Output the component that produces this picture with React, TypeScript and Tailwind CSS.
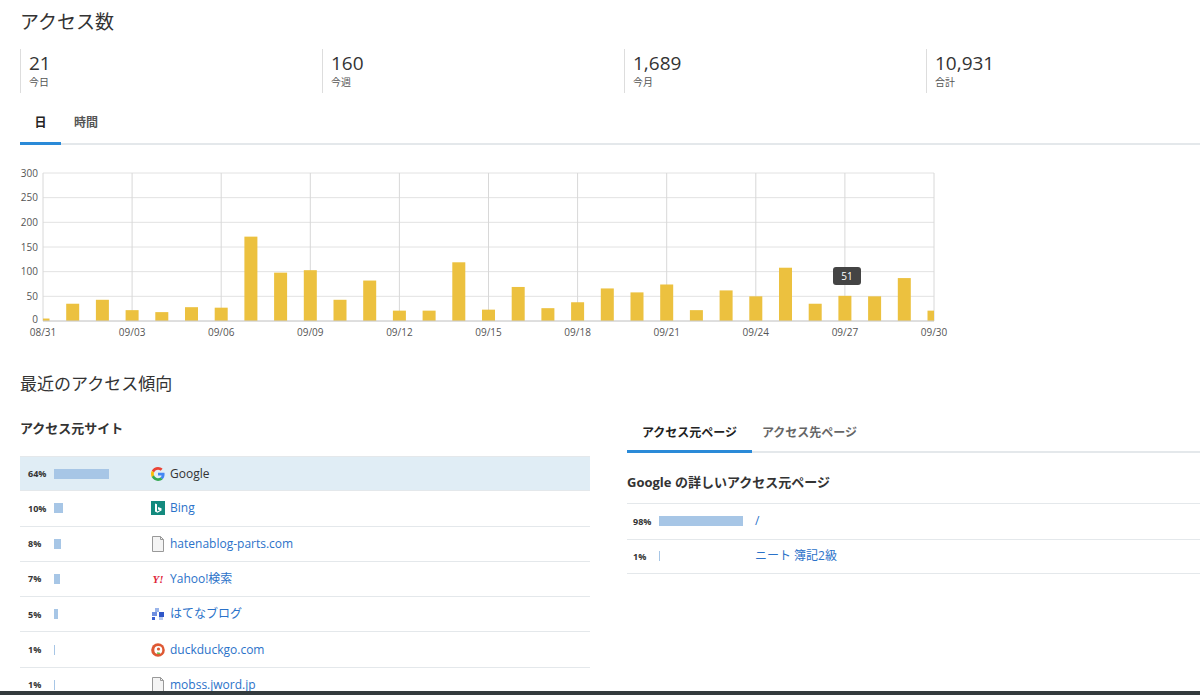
import React from "react";

const F = { fontFamily: '"Open Sans", "Noto Sans CJK JP", sans-serif' };

const values = [5, 35, 43, 22, 18, 28, 27, 171, 98, 103, 43, 82, 21, 21, 119, 23, 69, 26, 38, 66, 58, 74, 22, 62, 50, 108, 35, 51, 50, 87, 21];
const labels = ["08/31", "09/03", "09/06", "09/09", "09/12", "09/15", "09/18", "09/21", "09/24", "09/27", "09/30"];

function Chart() {
  const x0 = 43, x1 = 934, top = 172, bot = 320;
  const step = (x1 - x0) / 30;
  const y = (v: number) => bot - (v / 300) * (bot - top);
  return (
    <svg width="960" height="180" viewBox="0 160 960 180" className="block">
      {[0, 50, 100, 150, 200, 250, 300].map((v) => (
        <g key={v}>
          <line x1={x0} x2={x1} y1={y(v)} y2={y(v)} stroke="#e2e2e2" />
          <text x={38} y={y(v) + (v === 0 ? 2 : 3.5)} textAnchor="end" fontSize="10" fill="#555" style={F}>{v}</text>
        </g>
      ))}
      {labels.map((l, i) => {
        const x = x0 + i * 3 * step;
        return (
          <g key={l}>
            <line x1={x} x2={x} y1={top} y2={bot} stroke="#d8d8d8" />
            <text x={x} y={335} textAnchor="middle" fontSize="10" fill="#555" style={F}>{l}</text>
          </g>
        );
      })}
      {values.map((v, i) => {
        const cx = x0 + i * step;
        const w = 13;
        let l = cx - w / 2, r = cx + w / 2;
        if (i === 0) l = x0;
        if (i === 30) r = x1;
        return <rect key={i} x={l} y={y(v)} width={r - l} height={bot - y(v)} fill="#ecc13f" />;
      })}
      <line x1={x0} x2={x1} y1={bot} y2={bot} stroke="#ccc" />
      <rect x={833} y={266} width={28} height={18} rx={3} fill="#444" />
      <text x={847} y={279} textAnchor="middle" fontSize="10" fill="#fff" style={F}>51</text>
    </svg>
  );
}

function BarPct({ pct, max }: { pct: number; max: number }) {
  return (
    <div className="flex items-center h-full">
      <div className="bg-[#a7c6e6] h-[10px]" style={{ width: Math.max(1, (pct / 100) * max) }} />
    </div>
  );
}

const DocIcon = () => (
  <svg width="14" height="16" viewBox="0 0 14 16"><path d="M1.5 .5h8l3 3v12h-11z" fill="#f4f4f4" stroke="#999" /><path d="M9.5 .5v3h3" fill="none" stroke="#999" /></svg>
);

const icons: Record<string, React.ReactNode> = {
  google: (
    <svg width="14" height="14" viewBox="0 0 48 48"><path fill="#EA4335" d="M24 9.5c3.5 0 6.6 1.2 9 3.5l6.7-6.7C35.6 2.4 30.2 0 24 0 14.6 0 6.6 5.4 2.7 13.2l7.8 6C12.4 13.7 17.7 9.5 24 9.5z"/><path fill="#4285F4" d="M46.5 24.5c0-1.6-.1-3.1-.4-4.5H24v9h12.6c-.5 2.9-2.2 5.4-4.7 7.1l7.6 5.9c4.4-4.1 7-10.1 7-17.5z"/><path fill="#FBBC05" d="M10.5 28.8c-.5-1.5-.8-3.1-.8-4.8s.3-3.3.8-4.8l-7.8-6C1 16.6 0 20.2 0 24s1 7.4 2.7 10.8l7.8-6z"/><path fill="#34A853" d="M24 48c6.5 0 11.9-2.1 15.9-5.8l-7.6-5.9c-2.1 1.4-4.9 2.300-8.3 2.3-6.3 0-11.6-4.2-13.5-9.9l-7.8 6C6.6 42.6 14.6 48 24 48z"/></svg>
  ),
  bing: (
    <svg width="14" height="14" viewBox="0 0 14 14"><rect width="14" height="14" fill="#138a7e" /><path d="M4 2.5v8l2.5 1.2 4-2.3V7.3L7 6v2.4l1.8.8L6 10.6V3.2z" fill="#fff" /></svg>
  ),
  doc: <DocIcon />,
  yahoo: <span className="text-[11px] font-bold italic text-[#e0263a] leading-none" style={{ fontFamily: '"Liberation Serif", serif' }}>Y!</span>,
  hatena: (
    <svg width="14" height="14" viewBox="0 0 14 14"><rect x="4" y="1" width="4" height="4" fill="#9bb5ea" /><rect x="8" y="5" width="5" height="5" fill="#2f56c8" /><rect x="1" y="5" width="5" height="4" fill="#6f8fe0" /><rect x="1" y="10" width="3" height="3" fill="#3a60cf" /><rect x="8" y="10" width="4" height="3" fill="#b8caf0" /></svg>
  ),
  ddg: (
    <svg width="14" height="14" viewBox="0 0 14 14"><circle cx="7" cy="7" r="6.8" fill="#de5833" /><circle cx="7.3" cy="7" r="4" fill="#fff" /><circle cx="7.5" cy="6" r="1.6" fill="#de5833" /><path d="M6 10l3 0.5" stroke="#67bd47" strokeWidth="1.5" /></svg>
  ),
};

const sites = [
  { pct: 64, name: "Google", icon: "google", sel: true },
  { pct: 10, name: "Bing", icon: "bing" },
  { pct: 8, name: "hatenablog-parts.com", icon: "doc" },
  { pct: 7, name: "Yahoo!検索", icon: "yahoo" },
  { pct: 5, name: "はてなブログ", icon: "hatena" },
  { pct: 1, name: "duckduckgo.com", icon: "ddg" },
  { pct: 1, name: "mobss.jword.jp", icon: "doc" },
];

export default function App() {
  const stats = [
    ["21", "今日"],
    ["160", "今週"],
    ["1,689", "今月"],
    ["10,931", "合計"],
  ];
  return (
    <div className="w-[1200px] h-[695px] overflow-hidden bg-white text-[#333] relative" style={F}>
      <div className="pl-[20px]">
        <h1 className="text-[19px] pt-[8px] h-[40px] text-[#333]">アクセス数</h1>
        <div className="grid grid-cols-[302px_302px_302px_302px] mt-[9px] h-[44px]">
          {stats.map(([n, l]) => (
            <div key={l} className="border-l border-[#ddd] pl-[8px]">
              <div className="text-[19px] leading-[24px] mt-[2px]">{n}</div>
              <div className="text-[10px] text-[#555] leading-[14px]">{l}</div>
            </div>
          ))}
        </div>
        <div className="flex mt-[21px] border-b-2 border-[#e4e8eb] text-[12px] font-bold">
          <div className="w-[41px] text-center pb-[10px] border-b-[3px] border-[#2a8ad8] -mb-[2px] text-[#222]">日</div>
          <div className="w-[50px] text-center pb-[10px] text-[#555]">時間</div>
        </div>
      </div>
      <div className="mt-[16px]">
        <Chart />
      </div>
      <h2 className="pl-[20px] text-[17px] mt-[30px] h-[46px] text-[#333]">最近のアクセス傾向</h2>
      <div className="flex pl-[20px] gap-[37px]">
        <div className="w-[570px]">
          <h3 className="text-[13px] font-bold h-[39px] pt-[2px] text-[#333]">アクセス元サイト</h3>
          {sites.map((s) => (
            <div key={s.name} className={`flex items-center h-[35.3px] border-b border-[#e4e8eb] ${s.sel ? "bg-[#e0edf5] border-t" : ""}`}>
              <div className="w-[34px] pl-[8px] text-[9px] font-bold text-[#333]">{s.pct}%</div>
              <div className="w-[94px]"><BarPct pct={s.pct} max={86} /></div>
              <div className="w-[20px] flex items-center justify-center">{icons[s.icon]}</div>
              <div className={`pl-[2px] text-[12px] ${s.sel ? "text-[#333]" : "text-[#2b72c9]"}`}>{s.name}</div>
            </div>
          ))}
        </div>
        <div className="flex-1">
          <div className="flex border-b-2 border-[#e4e8eb] text-[12px] font-bold mt-[7px]">
            <div className="w-[125px] text-center pb-[8px] border-b-[3px] border-[#2a8ad8] -mb-[2px] text-[#222]">アクセス元ページ</div>
            <div className="w-[115px] text-center pb-[8px] text-[#666]">アクセス先ページ</div>
          </div>
          <h3 className="text-[13px] font-bold h-[50px] pt-[20px] text-[#333]">Google の詳しいアクセス元ページ</h3>
          {[
            [98, "/"],
            [1, "ニート 簿記2級"],
          ].map(([p, t]) => (
            <div key={t} className="flex items-center h-[35.5px] border-t border-[#e4e8eb] last:border-b">
              <div className="w-[32px] pl-[6px] text-[9px] font-bold">{p}%</div>
              <div className="w-[96px]"><BarPct pct={p as number} max={86} /></div>
              <div className="text-[12px] text-[#2b72c9]">{t}</div>
            </div>
          ))}
        </div>
      </div>
      <div className="absolute bottom-0 left-0 right-0 h-[4px] bg-[#333a3d]" />
    </div>
  );
}
